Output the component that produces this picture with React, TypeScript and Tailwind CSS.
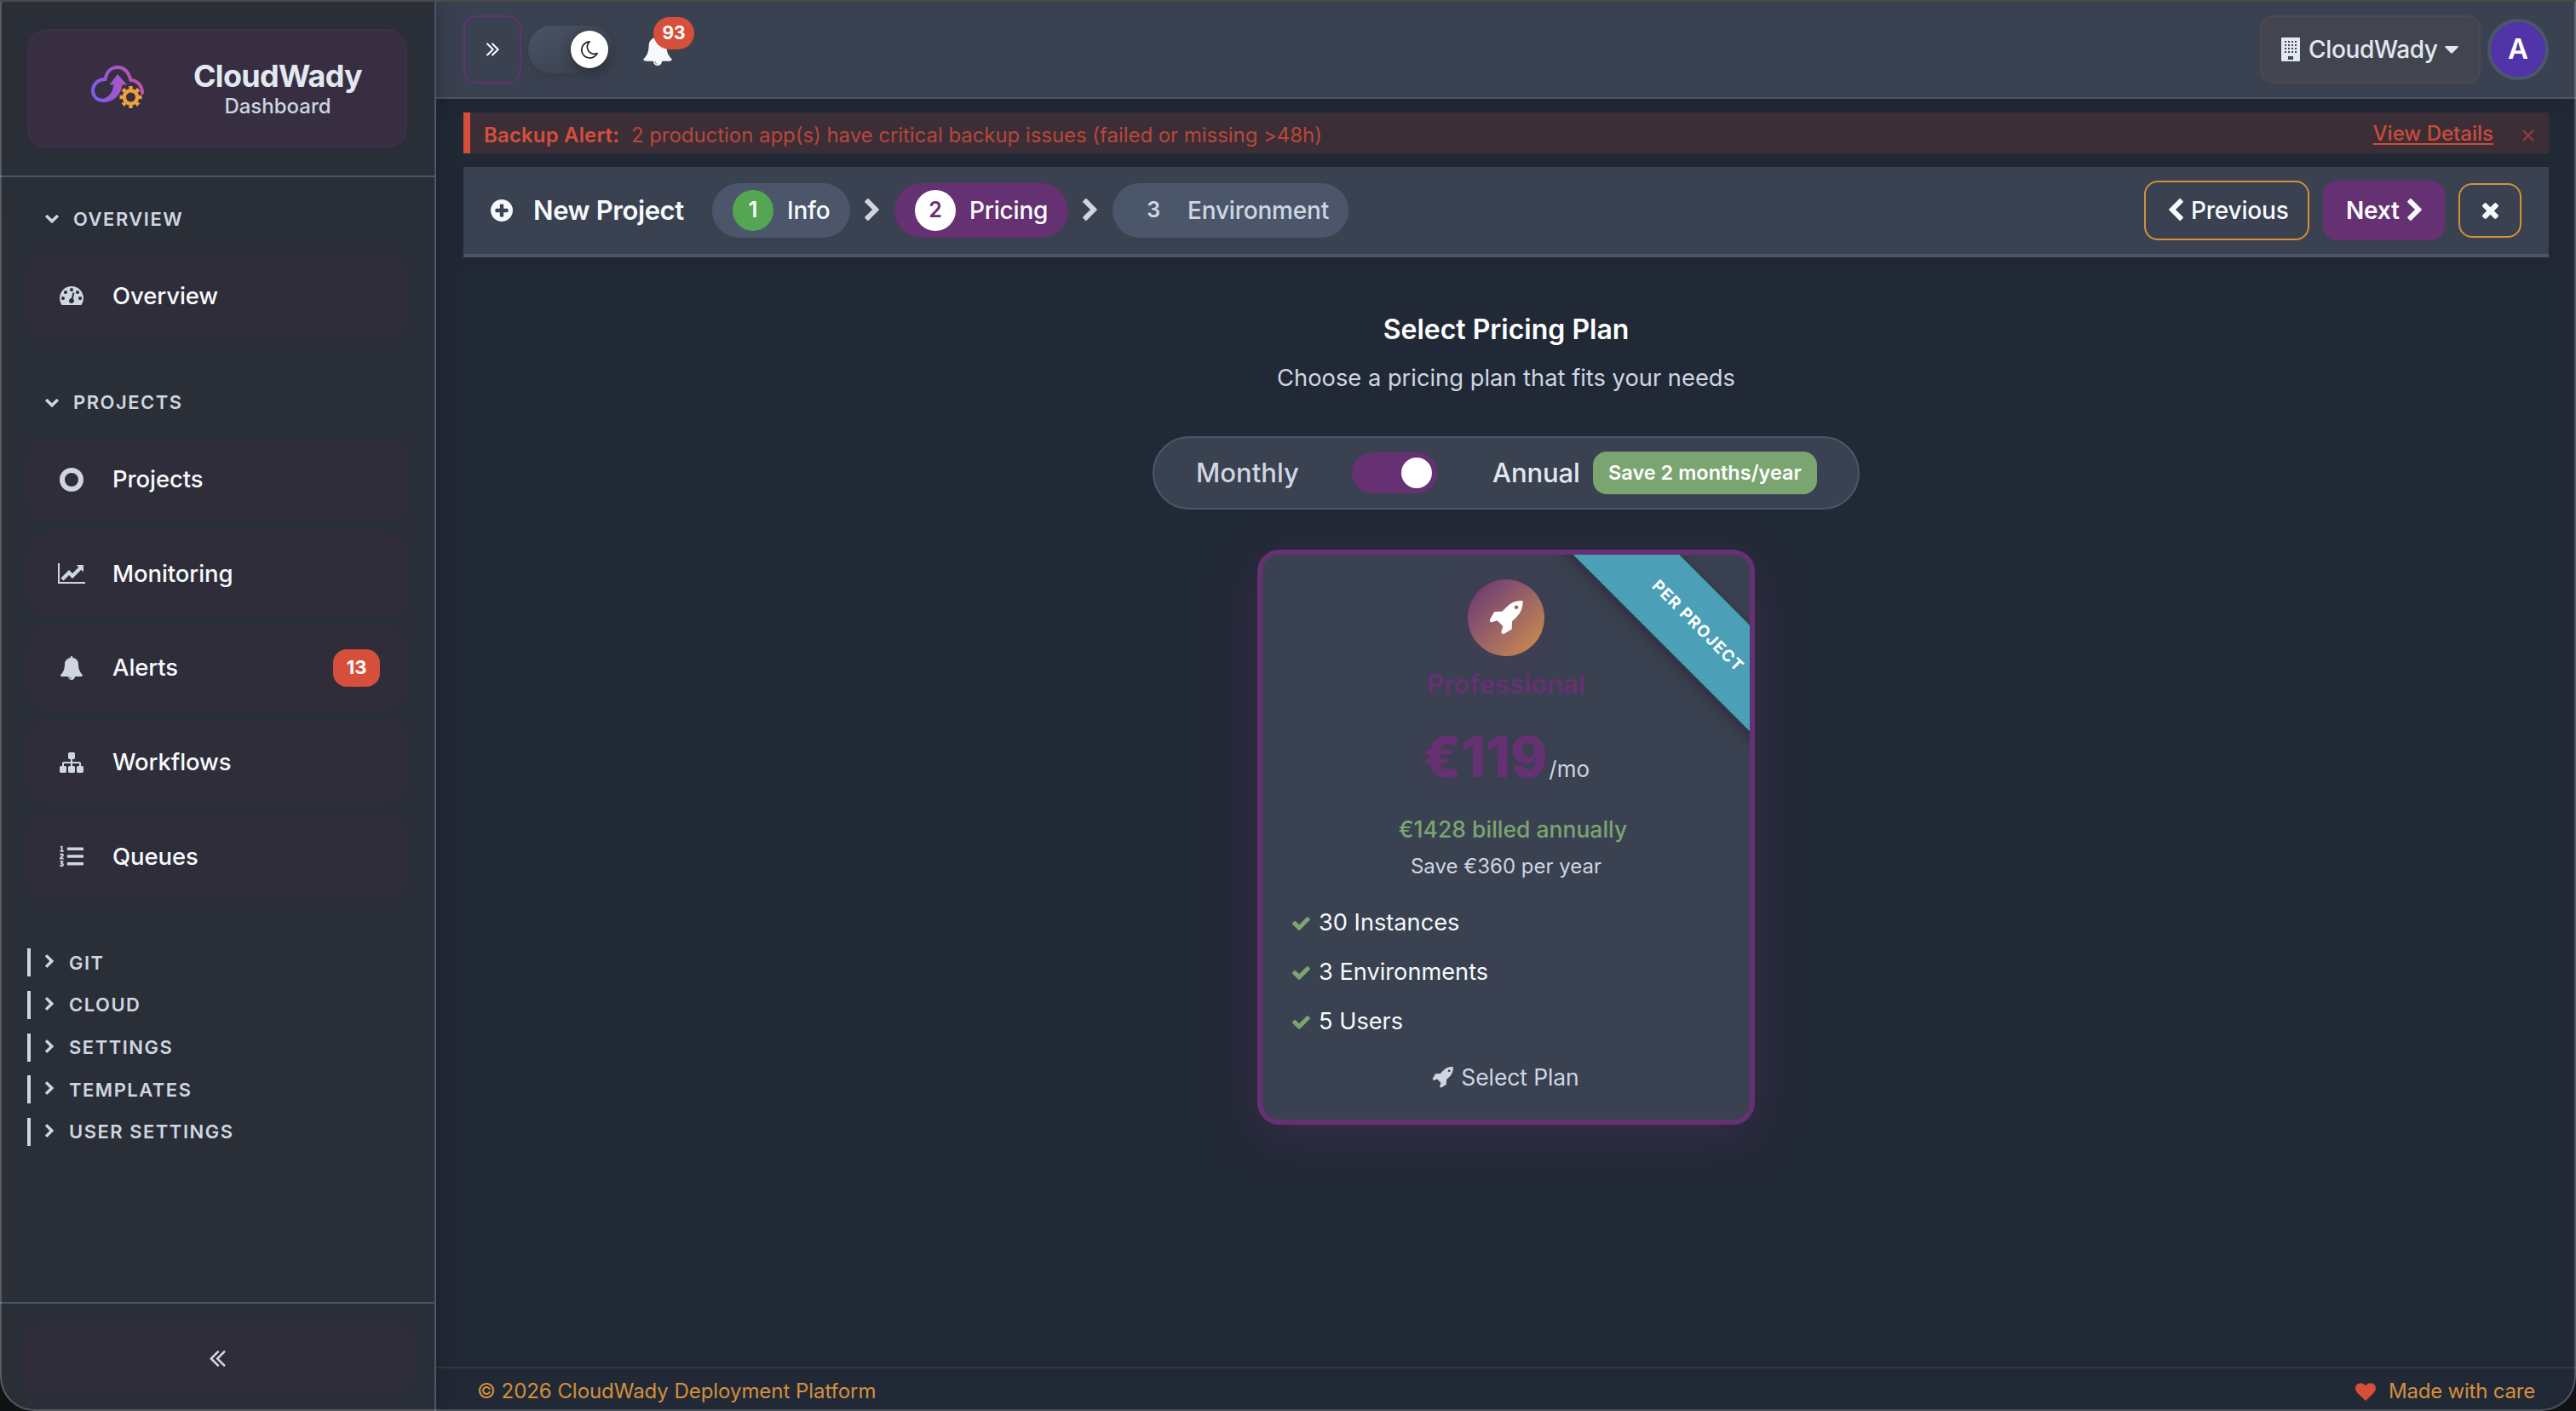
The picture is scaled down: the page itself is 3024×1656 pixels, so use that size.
import { ReactNode, useState } from "react";
import { FaListOl } from "react-icons/fa";

// [viewBox, path] pairs of the classic icon set
const glyphs = {
  dashboard: [
    "0 256 1792 1408",
    "M384 1152q0-53-37.5-90.5t-90.5-37.5-90.5 37.5-37.5 90.5 37.5 90.5 90.5 37.5 90.5-37.5 37.5-90.5zm192-448q0-53-37.5-90.5t-90.5-37.5-90.5 37.5-37.5 90.5 37.5 90.5 90.5 37.5 90.5-37.5 37.5-90.5zm428 481l101-382q6-26-7.5-48.5t-38.5-29.5-48 6.5-30 39.5l-101 382q-60 5-107 43.5t-63 98.5q-20 77 20 146t117 89 146-20 89-117q16-60-6-117t-72-91zm660-33q0-53-37.5-90.5t-90.5-37.5-90.5 37.5-37.5 90.5 37.5 90.5 90.5 37.5 90.5-37.5 37.5-90.5zm-640-640q0-53-37.5-90.5t-90.5-37.5-90.5 37.5-37.5 90.5 37.5 90.5 90.5 37.5 90.5-37.5 37.5-90.5zm448 192q0-53-37.5-90.5t-90.5-37.5-90.5 37.5-37.5 90.5 37.5 90.5 90.5 37.5 90.5-37.5 37.5-90.5zm320 448q0 261-141 483-19 29-54 29h-1402q-35 0-54-29-141-221-141-483 0-182 71-348t191-286 286-191 348-71 348 71 286 191 191 286 71 348z",
  ],
  lineChart: [
    "0 128 2048 1536",
    "M2048 1536v128h-2048v-1536h128v1408h1920zm-128-1248v435q0 21-19.5 29.5t-35.5-7.5l-121-121-633 633q-10 10-23 10t-23-10l-233-233-416 416-192-192 585-585q10-10 23-10t23 10l233 233 464-464-121-121q-16-16-7.5-35.5t29.5-19.5h435q14 0 23 9t9 23z",
  ],
  bell: [
    "64 0 1664 1792",
    "M912 1696q0-16-16-16-59 0-101.5-42.5t-42.5-101.5q0-16-16-16t-16 16q0 73 51.5 124.5t124.5 51.5q16 0 16-16zm816-288q0 52-38 90t-90 38h-448q0 106-75 181t-181 75-181-75-75-181h-448q-52 0-90-38t-38-90q50-42 91-88t85-119.5 74.5-158.5 50-206 19.5-260q0-152 117-282.5t307-158.5q-8-19-8-39 0-40 28-68t68-28 68 28 28 68q0 20-8 39 190 28 307 158.5t117 282.5q0 139 19.5 260t50 206 74.5 158.5 85 119.5 91 88z",
  ],
  sitemap: [
    "0 128 1792 1536",
    "M1792 1248v320q0 40-28 68t-68 28h-320q-40 0-68-28t-28-68v-320q0-40 28-68t68-28h96v-192h-512v192h96q40 0 68 28t28 68v320q0 40-28 68t-68 28h-320q-40 0-68-28t-28-68v-320q0-40 28-68t68-28h96v-192h-512v192h96q40 0 68 28t28 68v320q0 40-28 68t-68 28h-320q-40 0-68-28t-28-68v-320q0-40 28-68t68-28h96v-192q0-52 38-90t90-38h512v-192h-96q-40 0-68-28t-28-68v-320q0-40 28-68t68-28h320q40 0 68 28t28 68v320q0 40-28 68t-68 28h-96v192h512q52 0 90 38t38 90v192h96q40 0 68 28t28 68z",
  ],
  rocket: [
    "64 128 1600 1664",
    "M1440 448q0-40-28-68t-68-28-68 28-28 68 28 68 68 28 68-28 28-68zm224-288q0 249-75.5 430.5t-253.5 360.5q-81 80-195 176l-20 379q-2 16-16 26l-384 224q-7 4-16 4-12 0-23-9l-64-64q-13-14-8-32l85-276-281-281-276 85q-3 1-9 1-14 0-23-9l-64-64q-17-19-5-39l224-384q10-14 26-16l379-20q96-114 176-195 188-187 358-258t431-71q14 0 24 9.5t10 22.5z",
  ],
  check: [
    "121 334 1550 1188",
    "M1671 566q0 40-28 68l-724 724-136 136q-28 28-68 28t-68-28l-136-136-362-362q-28-28-28-68t28-68l136-136q28-28 68-28t68 28l294 295 656-657q28-28 68-28t68 28l136 136q28 28 28 68z",
  ],
  times: [
    "302 366 1188 1188",
    "M1490 1322q0 40-28 68l-136 136q-28 28-68 28t-68-28l-294-294-294 294q-28 28-68 28t-68-28l-136-136q-28-28-28-68t28-68l294-294-294-294q-28-28-28-68t28-68l136-136q28-28 68-28t68 28l294 294 294-294q28-28 68-28t68 28l136 136q28 28 28 68t-28 68l-294 294 294 294q28 28 28 68z",
  ],
  right: [
    "346 26 1036 1612",
    "M1363 877l-742 742q-19 19-45 19t-45-19l-166-166q-19-19-19-45t19-45l531-531-531-531q-19-19-19-45t19-45l166-166q19-19 45-19t45 19l742 742q19 19 19 45t-19 45z",
  ],
  left: [
    "410 26 1036 1612",
    "M1427 301l-531 531 531 531q19 19 19 45t-19 45l-166 166q-19 19-45 19t-45-19l-742-742q-19-19-19-45t19-45l742-742q19-19 45-19t45 19l166 166q19 19 19 45t-19 45z",
  ],
  plusCircle: [
    "128 128 1536 1536",
    "M1344 960v-128q0-26-19-45t-45-19h-256v-256q0-26-19-45t-45-19h-128q-26 0-45 19t-19 45v256h-256q-26 0-45 19t-19 45v128q0 26 19 45t45 19h256v256q0 26 19 45t45 19h128q26 0 45-19t19-45v-256h256q26 0 45-19t19-45zm320-64q0 209-103 385.5t-279.5 279.5-385.5 103-385.5-103-279.5-279.5-103-385.5 103-385.5 279.5-279.5 385.5-103 385.5 103 279.5 279.5 103 385.5z",
  ],
  doubleLeft: [
    "429 461 966 998",
    "M1011 1376q0 13-10 23l-50 50q-10 10-23 10t-23-10l-466-466q-10-10-10-23t10-23l466-466q10-10 23-10t23 10l50 50q10 10 10 23t-10 23l-393 393 393 393q10 10 10 23zm384 0q0 13-10 23l-50 50q-10 10-23 10t-23-10l-466-466q-10-10-10-23t10-23l466-466q10-10 23-10t23 10l50 50q10 10 10 23t-10 23l-393 393 393 393q10 10 10 23z",
  ],
  moon: [
    "128 128 1472 1536",
    "M1390 1303q-54 9-110 9-182 0-337-90t-245-245-90-337q0-192 104-357-201 60-328.5 229t-127.5 384q0 130 51 248.5t136.5 204 204 136.5 248.5 51q144 0 273.5-61.5t220.5-171.5zm203-85q-94 203-283.5 324.5t-413.5 121.5q-156 0-298-61t-245-164-164-245-61-298q0-153 57.5-292.5t156-241.5 235.5-164.5 290-68.5q44-2 61 39 18 41-15 72-86 78-131.5 181.5t-45.5 218.5q0 148 73 273t198 198 273 73q118 0 228-51 41-18 72 13 14 14 17.5 34t-4.5 38z",
  ],
  heart: [
    "0 128 1792 1536",
    "M896 1664q-26 0-44-18l-624-602q-10-8-27.5-26t-55.5-65.5-68-97.5-53.5-121-23.5-138q0-220 127-344t351-124q62 0 126.5 21.5t120 58 95.5 68.5 76 68q36-36 76-68t95.5-68.5 120-58 126.5-21.5q224 0 351 124t127 344q0 221-229 450l-623 600q-18 18-44 18z",
  ],
};

function Icon({
  name,
  className,
}: {
  name: keyof typeof glyphs;
  className: string;
}) {
  const [viewBox, d] = glyphs[name];
  return (
    <svg viewBox={viewBox} className={`shrink-0 ${className}`} fill="currentColor">
      <path d={d} />
    </svg>
  );
}

function Logo() {
  return (
    <svg viewBox="106 75 64 52" className="w-16 h-[52px] shrink-0" fill="none">
      <defs>
        <linearGradient id="cloud" x1="107" y1="110" x2="168" y2="92" gradientUnits="userSpaceOnUse">
          <stop offset="0" stopColor="#7a5cf0" />
          <stop offset="0.5" stopColor="#a257cc" />
          <stop offset="1" stopColor="#c94fa8" />
        </linearGradient>
      </defs>
      <path
        d="M167 108C167 99 161 93.500 153.500 93C151 84 146 78 138 78C130 78 125 84 123.500 92C115 92 109 98 109 105.500C109 112 114 117 121 117C128 117 133 112 135 107"
        stroke="url(#cloud)"
        strokeWidth="4"
        strokeLinecap="round"
      />
      <path
        d="M138 86L149 98.500H143.500C142 110 134 119 121 119V115C128 113 132.500 107 133.500 98.500H128.500Z"
        fill="url(#cloud)"
      />
      <circle cx="153.500" cy="113" r="7.700" stroke="#eea23e" strokeWidth="4.400" />
      <circle
        cx="153.500"
        cy="113"
        r="11.200"
        stroke="#eea23e"
        strokeWidth="3.800"
        pathLength="16"
        strokeDasharray="1 1"
        strokeDashoffset="0.5"
      />
    </svg>
  );
}

function Building() {
  return (
    <svg viewBox="0 0 22 28" className="w-[22px] h-7 shrink-0">
      <rect width="22" height="28" rx="1" fill="#e2e8f0" />
      {[4, 8, 12, 16].map((y) =>
        [4, 8, 12, 16].map((x) => (
          <rect key={`${x}-${y}`} x={x} y={y} width="2" height="2" fill="#42454f" />
        ))
      )}
      <rect x="8" y="22" width="6" height="4" fill="#42454f" />
    </svg>
  );
}

function NavItem({
  icon,
  label,
  badge,
}: {
  icon: ReactNode;
  label: string;
  badge?: string;
}) {
  return (
    <a className="h-[98.500px] rounded-[24px] bg-[#2e2d39] flex items-center pl-9 pr-8">
      <span className="w-8 mr-8 flex justify-center text-[#cfd6e1]">{icon}</span>
      <span className="text-[27.500px] font-medium text-[#f7fafc] tracking-[-0.1px]">{label}</span>
      {badge && (
        <span className="ml-auto w-[55px] h-11 rounded-2xl bg-[#d64f3b] text-white text-[22px] font-bold flex items-center justify-center">
          {badge}
        </span>
      )}
    </a>
  );
}

function SectionTitle({ children }: { children: ReactNode }) {
  return (
    <div className="h-8 pl-[21px] flex items-center text-[22px] font-semibold tracking-[1.5px] text-[#cfd6e1]">
      <Icon name="right" className="w-[10px] h-4 rotate-90 mr-5 ml-[3px]" />
      {children}
    </div>
  );
}

const projectLinks = [
  {
    label: "Projects",
    icon: <span className="size-7 rounded-full border-[6px] border-[#cfd6e1]" />,
  },
  { label: "Monitoring", icon: <Icon name="lineChart" className="w-8 h-6" /> },
  { label: "Alerts", icon: <Icon name="bell" className="w-[26px] h-7" />, badge: "13" },
  { label: "Workflows", icon: <Icon name="sitemap" className="w-7 h-6" /> },
  { label: "Queues", icon: <FaListOl size={28} /> },
];

const collapsed = ["GIT", "CLOUD", "SETTINGS", "TEMPLATES", "USER SETTINGS"];

function Sidebar() {
  return (
    <aside className="w-[512px] shrink-0 flex flex-col bg-[#2a2e37] border-r-2 border-[#4c566a] shadow-[4px_0_24px_rgba(0,0,0,0.2)] z-10">
      <div className="h-[208px] shrink-0 border-b-2 border-[#4c566a] pt-[34px] px-8">
        <div className="h-[140px] rounded-[24px] bg-[#372f41] border-2 border-[#3e2f48] flex items-center">
          <div className="ml-[72px] -mt-1">
            <Logo />
          </div>
          <div className="ml-[56px] mt-[2px] w-[200px] flex flex-col items-center">
            <span className="text-[36px] leading-10 font-bold text-[#e2e8f0] tracking-[-0.7px]">
              CloudWady
            </span>
            <span className="text-[24px] leading-8 font-medium text-[#cbd5e0]">Dashboard</span>
          </div>
        </div>
      </div>

      <nav className="flex-1 px-8 flex flex-col">
        <div className="mt-[33px]">
          <SectionTitle>OVERVIEW</SectionTitle>
        </div>
        <div className="mt-[25px]">
          <NavItem label="Overview" icon={<Icon name="dashboard" className="w-7 h-[22px]" />} />
        </div>
        <div className="mt-[60px]">
          <SectionTitle>PROJECTS</SectionTitle>
        </div>
        <div className="mt-[25px] flex flex-col gap-[12.100px]">
          {projectLinks.map((link) => (
            <NavItem key={link.label} {...link} />
          ))}
        </div>
        <div className="mt-[59px] flex flex-col gap-[16.600px]">
          {collapsed.map((label) => (
            <div
              key={label}
              className="h-[33px] border-l-4 border-[#cfd6e1] pl-[17px] pt-px flex items-center text-[22px] font-semibold tracking-[1.5px] text-[#cfd6e1]"
            >
              <Icon name="right" className="w-[10px] h-4 mr-[18px] -mt-1" />
              {label}
            </div>
          ))}
        </div>
      </nav>

      <div className="h-[128px] shrink-0 border-t-2 border-[#4c566a] px-6 pt-6">
        <button className="w-full h-20 rounded-[20px] bg-[#2e2d39] text-[#cfd6e1] flex items-center justify-center">
          <Icon name="doubleLeft" className="w-[19px] h-[19px]" />
        </button>
      </div>
    </aside>
  );
}

function Topbar() {
  return (
    <header className="h-[116px] shrink-0 pt-[2px] bg-[#3a4150] border-b-2 border-[#4c566a] pl-8 pr-8 flex items-center shadow-[0_4px_20px_rgba(0,0,0,0.12)]">
      <button className="w-[68px] h-20 rounded-2xl border-2 border-[#663173] text-[#f7fafc] flex items-center justify-center">
        <Icon name="doubleLeft" className="w-[15px] h-4 rotate-180" />
      </button>
      <div className="ml-2 w-[100px] h-14 rounded-full bg-linear-to-br from-[#4a5365] to-[#373e4c] p-[6px] flex items-center justify-end shadow-[0_4px_16px_rgba(0,0,0,0.08)]">
        <span className="size-11 rounded-full bg-white text-[#22252b] flex items-center justify-center shadow-[0_4px_12px_rgba(0,0,0,0.3)]">
          <Icon name="moon" className="w-5 h-[21px]" />
        </span>
      </div>
      <div className="relative ml-[35px] mt-[2px] text-[#f7fafc]">
        <Icon name="bell" className="w-[34px] h-[36px]" />
        <span className="absolute left-[12px] -top-[21px] w-12 h-[38px] rounded-full bg-[#d64f3b] text-white text-[21px] font-bold flex items-center justify-center">
          93
        </span>
      </div>

      <button className="ml-auto w-[259px] h-20 rounded-2xl bg-[#42454f] border-2 border-[#50494b] text-[#e2e8f0] flex items-center pl-[23px]">
        <Building />
        <span className="ml-[10px] text-[28px] font-medium tracking-[-0.35px]">CloudWady</span>
        <svg viewBox="0 0 16 9" className="w-4 h-[9px] ml-2 -mb-px" fill="currentColor">
          <path d="M1 0H15Q16.500 0.500 15.500 1.500L9 8.300Q8 9.200 7 8.300L0.500 1.500Q-0.500 0.500 1 0Z" />
        </svg>
      </button>
      <span className="ml-2 size-[72px] rounded-full bg-[#5034a8] border-4 border-[#4c566a] text-white text-[33px] font-semibold flex items-center justify-center">
        A
      </span>
    </header>
  );
}

function BackupAlert() {
  return (
    <div className="h-12 shrink-0 bg-[#3c2e36] border-l-8 border-[#d64f3b] flex items-center text-[24px] pl-4 pr-4 pt-[6px]">
      <strong className="font-semibold text-[#d64f3b] tracking-[0.15px]">Backup Alert:</strong>
      <span className="ml-[14px] text-[#b8473a] tracking-[-0.05px]">
        2 production app(s) have critical backup issues (failed or missing &gt;48h)
      </span>
      <a className="ml-auto -mt-1 text-[#cc4c3a] font-medium underline underline-offset-[3px] decoration-2">
        View Details
      </a>
      <svg viewBox="0 0 14 14" className="w-[14px] h-[14px] ml-[34px] mr-px" stroke="#92403a" strokeWidth="2">
        <path d="M1 1L13 13M13 1L1 13" />
      </svg>
    </div>
  );
}

function WizardBar() {
  return (
    <div className="h-[106px] shrink-0 bg-[#3a4150] border-b-4 border-[#4c566a] mt-4 px-8 flex items-center text-[#f7fafc] text-[28px] font-medium tracking-[-0.2px] shadow-[0_4px_16px_rgba(0,0,0,0.08)]">
      <Icon name="plusCircle" className="size-[26px]" />
      <h1 className="ml-6 mt-px w-[185px] whitespace-nowrap text-[31px] font-semibold tracking-[-0.4px]">
        New Project
      </h1>
      <div className="ml-[25px] w-[162px] h-16 rounded-full bg-[#4c566a] flex items-center pl-6">
        <span className="size-12 rounded-full bg-[#55a652] text-white text-[25px] font-semibold flex items-center justify-center mr-4">
          1
        </span>
        Info
      </div>
      <Icon name="right" className="w-[17px] h-[26px] ml-[17px] mr-[18px] -mt-[2px] text-[#cfd6e1]" />
      <div className="w-[204px] h-16 rounded-full bg-[#663173] text-white flex items-center pl-6">
        <span className="size-12 rounded-full bg-white text-[#663173] text-[25px] font-semibold flex items-center justify-center mr-4">
          2
        </span>
        Pricing
      </div>
      <Icon name="right" className="w-[17px] h-[26px] ml-[17px] mr-[18px] -mt-[2px] text-[#cfd6e1]" />
      <div className="w-[277px] h-16 rounded-full bg-[#4c566a] text-[#cfd6e1] flex items-center pl-6">
        <span className="size-12 text-[25px] font-semibold flex items-center justify-center mr-4">
          3
        </span>
        Environment
      </div>

      <button className="ml-auto w-[194px] h-[70px] rounded-2xl border-2 border-[#d4903c] flex items-center pl-[27px]">
        <Icon name="left" className="w-[17px] h-[26px] -mt-[2px] mr-[9px]" />
        Previous
      </button>
      <button className="ml-4 w-[143px] h-[70px] rounded-2xl bg-[#663173] flex items-center pl-[27px] font-semibold">
        Next
        <Icon name="right" className="w-[17px] h-[26px] -mt-[2px] ml-[9px]" />
      </button>
      <button className="ml-4 w-[74px] h-16 rounded-2xl border-2 border-[#d4903c] flex items-center justify-center">
        <Icon name="times" className="size-[19px]" />
      </button>
    </div>
  );
}

const features = ["30 Instances", "3 Environments", "5 Users"];

function PlanCard() {
  return (
    <div className="relative overflow-hidden w-[572px] h-[663px] rounded-[20px] bg-[#3a4150] flex flex-col items-center">
      {/* Ribbon */}
      <div className="absolute left-[311px] top-[40px] w-[400px] h-[88px] rotate-45 bg-[#4b9fb6] text-white text-[19px] font-bold tracking-[1.2px] flex items-center justify-center shadow-[0_4px_16px_rgba(0,0,0,0.3)]">
        PER PROJECT
      </div>

      <div className="mt-[29px] size-[90px] rounded-full bg-linear-to-br from-[#663173] to-[#d4903c] text-white flex items-center justify-center shadow-[0_8px_32px_rgba(102,49,115,0.3)]">
        <Icon name="rocket" className="w-[39px] h-10" />
      </div>
      <h3 className="mt-[13px] text-[31px] leading-10 font-semibold text-[#663173]">Professional</h3>
      <div className="mt-[25px] h-20 flex items-baseline">
        <span className="text-[66px] leading-20 font-extrabold text-[#663173] tracking-[-0.3px] [text-shadow:0_4px_8px_rgba(102,49,115,0.2)]">
          €119
        </span>
        <span className="ml-[2px] text-[26px] text-[#cfd6e1]">/mo</span>
      </div>
      <p className="ml-4 mt-[29px] text-[26.500px] leading-8 font-medium text-[#7aa571]">
        €1428 billed annually
      </p>
      <p className="mt-3 text-[24px] leading-8 text-[#cfd6e1]">Save €360 per year</p>
      <ul className="self-start ml-[35px] mt-[21px]">
        {features.map((feature) => (
          <li key={feature} className="h-[58px] flex items-center text-[27.200px] text-[#f7fafc]">
            <Icon name="check" className="w-[21px] h-4 mr-[10px] mt-[2px] text-[#7aa571]" />
            {feature}
          </li>
        ))}
      </ul>
      <button className="mt-4 flex items-center text-[26.500px] leading-10 tracking-[-0.1px] text-[#cfd6e1]">
        <Icon name="rocket" className="w-6 h-[25px] mr-[9px]" />
        Select Plan
      </button>
    </div>
  );
}

function Pricing() {
  const [annual, setAnnual] = useState(true);
  return (
    <section className="flex-1 flex flex-col items-center">
      <h2 className="mt-[65px] text-[32px] leading-10 font-semibold text-white">
        Select Pricing Plan
      </h2>
      <p className="mt-[17px] text-[27.300px] leading-10 text-[#cfd6e1]">
        Choose a pricing plan that fits your needs
      </p>
      <div className="mt-[48px] w-[830px] h-[86px] rounded-full bg-[#3a4150] border-2 border-[#4c566a] flex items-center pl-[49px] text-[31px] font-medium">
        <span className="w-[121px] text-[#cfd6e1]">Monthly</span>
        <button
          onClick={() => setAnnual(!annual)}
          className={`ml-[62px] w-[100px] h-12 rounded-full p-[6px] flex ${
            annual ? "bg-[#663173] justify-end" : "bg-[#4c566a] justify-start"
          }`}
        >
          <span className="size-9 rounded-full bg-white" />
        </button>
        <span className="ml-[65px] w-[118px] text-[#e2e8f0] tracking-[-0.1px]">Annual</span>
        <span className="w-[263px] h-[50px] rounded-2xl bg-[#7aa571] text-white text-[23.500px] font-semibold flex items-center justify-center whitespace-nowrap">
          Save 2 months/year
        </span>
      </div>

      <div className="mt-[47px] rounded-[26px] border-[6px] border-[#663173] bg-[#663173] shadow-[0_16px_60px_rgba(102,49,115,0.3)]">
        <PlanCard />
      </div>
    </section>
  );
}

export default function App() {
  return (
    <div className="w-[3024px] h-[1656px] bg-[#111214] font-['Inter',sans-serif] antialiased">
      <div className="relative w-full h-full overflow-hidden rounded-b-[40px] bg-[#222936] flex">
        <Sidebar />
        <div className="flex-1 flex flex-col min-w-0">
          <Topbar />
          <main className="flex-1 flex flex-col px-8 pt-4">
            <BackupAlert />
            <WizardBar />
            <Pricing />
          </main>
          <footer className="h-[52px] shrink-0 border-t-2 border-[#3b3539] pl-12 pr-12 flex items-center text-[24px] tracking-[-0.05px] text-[#d4903c] pt-1">
            <span>© 2026 CloudWady Deployment Platform</span>
            <Icon name="heart" className="ml-auto w-6 h-[21px] mr-[15px] text-[#d64f3b]" />
            <span className="tracking-[-0.2px]">Made with care</span>
          </footer>
        </div>
        {/* Window edge */}
        <div className="absolute inset-0 z-20 pointer-events-none rounded-b-[40px] border-2 border-t-[#4a4a47] border-x-[#ffffff38] border-b-[#ffffff30]" />
      </div>
    </div>
  );
}
